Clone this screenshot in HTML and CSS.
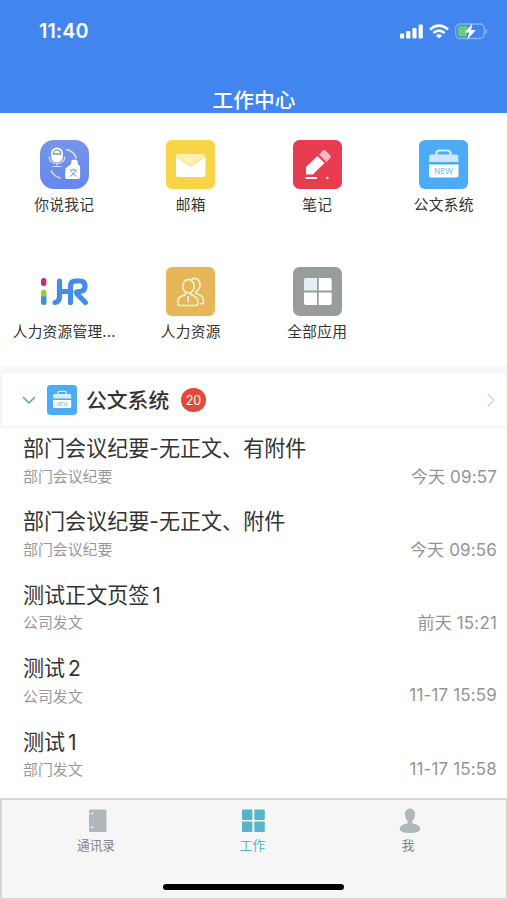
FILE: index.html
```html
<!DOCTYPE html>
<html lang="zh-CN">
<head>
<meta charset="utf-8">
<title>工作中心</title>
<link rel="stylesheet" href="styles.css">
</head>
<body>
<header class="header">
  <div class="status">
    <span class="time">11:40</span>
    <div class="signals">
      <svg width="23" height="15" viewBox="0 0 23 15" fill="#fff"><rect x="0" y="9.5" width="4.2" height="5" rx="1"/><rect x="6.2" y="7" width="4.2" height="7.5" rx="1"/><rect x="12.4" y="4" width="4.2" height="10.5" rx="1"/><rect x="18.6" y="0.5" width="4.2" height="14" rx="1"/></svg>
      <svg width="20" height="15" viewBox="0 0 20 15" fill="none" stroke="#fff" stroke-width="2.7"><path d="M1 5.5Q10-2.2 19 5.5"/><path d="M4.4 9Q10 4.2 15.6 9"/><path d="M10 14.6L6.9 11.4Q10 8.9 13.1 11.4Z" fill="#fff" stroke="none"/></svg>
      <svg width="33" height="17" viewBox="0 0 33 17"><rect x=".7" y="1" width="28.6" height="14.5" rx="4.3" fill="none" stroke="#7db7ef" stroke-width="1.3"/><path d="M5 3h7v10.500H5a2 2 0 0 1-2-2V5a2 2 0 0 1 2-2z" fill="#68c981"/><path d="M31 6q1.8 2.2 0 4.5z" fill="#7db7ef" stroke="#7db7ef"/><path d="M17.5.2L9.600 9.500h4.6L12.200 16.700 20.800 7h-4.800z" fill="#fff"/></svg>
    </div>
  </div>
  <h1 class="title">工作中心</h1>
</header>

<main>
<section class="apps">
  <div class="app">
    <svg class="icon" viewBox="0 0 49 49"><defs><linearGradient id="voice" x2="0" y2="1"><stop stop-color="#7795e8"/><stop offset="1" stop-color="#6687ee"/></linearGradient></defs><rect width="49" height="49" rx="14" fill="url(#voice)"/><rect x="11" y="7.5" width="12" height="15" rx="6" fill="#fff"/><path d="M13.5 15v-1.5a3.6 3.6 0 0 1 7.2 0V15M14 14h6" fill="none" stroke="#8198df" stroke-width="1.4"/><path d="M9 16.5c0 4 3.3 7 8 7s8-3 8-7M17 23.5v3M12.5 26.5h9" fill="none" stroke="#d5def9" stroke-width="1.2"/><path d="M26 9.5c5 .8 8.8 4.2 10.5 9M11 30.5c1.8 3.8 5.4 6.6 9.800 7.500" fill="none" stroke="#dbe5ff" stroke-width="1.5"/><path d="M25.500 28.500l5.700-4.500v-3l1.500-1.200h3.500l1.500 1.200v3l2.400 2.200V37q0 2-2 2h-11q-2 0-2-2z" fill="#fff"/><path d="M29.500 30h7.500M33.200 28.500V30M30 36.500q4.500-2 5.700-6M30.800 31q2 4 6 5.400" fill="none" stroke="#8299e4"/></svg>
    <span class="label">你说我记</span>
  </div>
  <div class="app">
    <svg class="icon" viewBox="0 0 49 49"><rect width="49" height="49" rx="6" fill="#f8d447"/><path d="M10.5 14h28v3L24.5 25.3 10.5 17z" fill="#fff0b7"/><path d="M10 17l14.5 9.3L39.5 17v18q0 2-2 2h-25.500q-2 0-2-2z" fill="#fff"/></svg>
    <span class="label">邮箱</span>
  </div>
  <div class="app">
    <svg class="icon" viewBox="0 0 49 49"><rect width="49" height="49" rx="6.5" fill="#e83d51"/><path d="M24.5 16l7 7L19.8 34.5H13V27z" fill="#fff"/><path d="M26 14.5l4-4q1.2-1.2 2.4 0l5 5q1.2 1.2 0 2.4l-4 4z" fill="#f8b9c1"/><path d="M13.2 38h10" stroke="#fff" stroke-width="2" stroke-linecap="round"/><circle cx="34.3" cy="38" r="1.2" fill="#fff"/></svg>
    <span class="label">笔记</span>
  </div>
  <div class="app">
    <svg class="icon" viewBox="0 0 49 49"><rect width="49" height="49" rx="6" fill="#4cabf5"/><path d="M17.5 15.5v-2.3q0-2.700 2.700-2.700h8.600q2.700 0 2.700 2.700v2.300" fill="none" stroke="#d5eefe" stroke-width="2.2"/><path d="M10 22v-5.300q0-2.200 2.200-2.200h25q2.200 0 2.200 2.200V22z" fill="#c9e8fe"/><path d="M10 24.5h29.500v11q0 2-2 2H12q-2 0-2-2z" fill="#fff"/><text class="new" x="24.7" y="34" text-anchor="middle">NEW</text></svg>
    <span class="label">公文系统</span>
  </div>
  <div class="app">
    <svg class="icon" viewBox="0 0 49 49"><rect x="1" y="11" width="5.5" height="8" rx="2.5" fill="#b83777"/><path d="M1 30v-5q0-2.500 2.700-2.500T6.500 25v5z" fill="#98c94f"/><path d="M1 29.500h5.500v6q0 2.500-2.800 2.500T1 35.500z" fill="#438de5"/><path d="M19.500 14v15q0 6-4.500 6.500M19.500 24.500H31M30.500 35.500V19.500q0-5.500 5-5.500h4.500q5 0 5 5t-5 5.500h-1.200q-3.700 0-1.200 3l7.800 8" fill="none" stroke="#438de5" stroke-width="5.200" stroke-linecap="round" stroke-linejoin="round"/></svg>
    <span class="label">人力资源管理...</span>
  </div>
  <div class="app">
    <svg class="icon" viewBox="0 0 49 49"><rect width="49" height="49" rx="6" fill="#e5b759"/><g fill="none" stroke="#fff5dd" stroke-width="1.5" stroke-linejoin="round" stroke-linecap="round"><ellipse cx="22.500" cy="19.300" rx="5.700" ry="6.700"/><path d="M19.500 25.500v2l-5 2.200q-2.700 1.300-2.700 5v2.200q0 1.500 1.500 1.500h17q1.500 0 1.500-1.500v-2.200q0-3.700-2.700-5l-4.200-2.200v-2M22.300 29.500V35M26 12.200c4-2.300 8 .7 8 5.200q0 4.600-3.800 7v2l4.300 2q3 1.500 3 5.200v2q0 1.200-1.300 1.200h-1.700"/></g></svg>
    <span class="label">人力资源</span>
  </div>
  <div class="app">
    <svg class="icon" viewBox="0 0 49 49"><rect width="49" height="49" rx="6.5" fill="#999c9d"/><path d="M24 11v12.500H11V13q0-2 2-2z" fill="#e6eff3"/><path d="M25.700 11h11q2 0 2 2v10.500h-13zM11 25.500h13V38H13q-2 0-2-2zM25.700 25.500h13V36q0 2-2 2h-11z" fill="#fff"/></svg>
    <span class="label">全部应用</span>
  </div>
</section>

<section class="docs">
  <div class="docs-head">
    <svg width="14" height="9" viewBox="0 0 14 9"><path d="M1 1l6 6 6-6" fill="none" stroke="#559fc2" stroke-width="1.5"/></svg>
    <svg class="small-icon" viewBox="0 0 49 49"><rect width="49" height="49" rx="6" fill="#4cabf5"/><path d="M17.500 15.500v-2.300q0-2.700 2.700-2.700h8.600q2.700 0 2.700 2.700v2.300" fill="none" stroke="#d5eefe" stroke-width="2.200"/><path d="M10 22v-5.300q0-2.200 2.200-2.200h25q2.200 0 2.200 2.200V22z" fill="#d5eefe"/><path d="M10 24.500h29.500v11q0 2-2 2H12q-2 0-2-2z" fill="#fff"/><text class="new" x="24.700" y="34" text-anchor="middle">NEW</text></svg>
    <h2 class="docs-title">公文系统</h2>
    <span class="badge">20</span>
    <svg class="next" width="8" height="15" viewBox="0 0 8 15"><path d="M.8 1l6.200 6.300-6.200 6.400" fill="none" stroke="#d2d2d2" stroke-width="1.3"/></svg>
  </div>
  <ul class="list">
    <li class="item"><h3 class="name">部门会议纪要-无正文、有附件</h3><div class="meta"><span>部门会议纪要</span><time class="date">今天 09:57</time></div></li>
    <li class="item"><h3 class="name">部门会议纪要-无正文、附件</h3><div class="meta"><span>部门会议纪要</span><time class="date">今天 09:56</time></div></li>
    <li class="item"><h3 class="name">测试正文页签<span class="num">1</span></h3><div class="meta"><span>公司发文</span><time class="date">前天 15:21</time></div></li>
    <li class="item"><h3 class="name">测试<span class="num">2</span></h3><div class="meta"><span>公司发文</span><time class="date">11-17 15:59</time></div></li>
    <li class="item"><h3 class="name">测试<span class="num">1</span></h3><div class="meta"><span>部门发文</span><time class="date">11-17 15:58</time></div></li>
  </ul>
</section>
</main>

<nav class="tabs">
  <div class="tab">
    <svg width="24" height="26" viewBox="0 0 24 26"><rect x="4" y="1.500" width="17.500" height="22.500" rx="1" fill="#b1b7bd"/><path d="M4.500 6h3V4M4.500 19.500h3v-2" fill="none" stroke="#e3e5e7" stroke-width="1.200"/></svg>
    <span>通讯录</span>
  </div>
  <div class="tab active">
    <svg width="24" height="26" viewBox="0 0 24 26" fill="#56b5c8"><rect x="1" y="1.500" width="10.400" height="10.400" rx="1"/><rect x="13.400" y="1.500" width="10.400" height="10.400" rx="1"/><rect x="1" y="13.600" width="10.400" height="10.400" rx="1"/><rect x="13.400" y="13.600" width="10.400" height="10.400" rx="1"/></svg>
    <span>工作</span>
  </div>
  <div class="tab">
    <svg width="24" height="26" viewBox="0 0 24 26"><path d="M13 .5c3 0 5 2.400 5 5.800 0 3-1.200 5.300-2.700 6.700v2.200c4.500.9 8 2.600 8 5.700 0 2.700-4.600 4-10.300 4s-10.300-1.300-10.300-4c0-3.100 3.500-4.800 8-5.700V13C9.200 11.600 8 9.300 8 6.300 8 2.900 10 .5 13 .5z" fill="#b1b7bd"/></svg>
    <span>我</span>
  </div>
  <div class="home"></div>
</nav>
</body>
</html>
```

FILE: styles.css
```css
* { box-sizing: border-box; }
body {
  margin: 0;
  height: 900px;
  display: flex;
  flex-direction: column;
  overflow: hidden;
  background: #fff;
  color: #333;
  font-family: Inter, "Noto Sans CJK SC", sans-serif;
}
h1, h2, h3, ul { margin: 0; padding: 0; font-weight: 400; }
svg { display: block; flex: none; }

.header {
  height: 113px;
  flex: none;
  background: #4385ef;
  color: #fff;
}
.status {
  height: 62px;
  padding: 0 19px 0 39px;
  display: flex;
  align-items: center;
  justify-content: space-between;
}
.time { font-size: 19.7px; font-weight: 600; letter-spacing: 0.1px; }
.signals { display: flex; align-items: center; gap: 6px; }
.title {
  margin-top: 25px;
  padding-left: 1px;
  font-size: 20.7px;
  line-height: 28px;
  font-weight: 500;
  text-align: center;
}

.apps {
  height: 253px;
  padding: 27px 0 0 1px;
  display: grid;
  grid-template-columns: repeat(4, 1fr);
  grid-auto-rows: 126.5px;
}
.app { display: flex; flex-direction: column; align-items: center; min-width: 0; }
.icon { width: 49px; height: 49px; }
.label {
  margin-top: 5px;
  font-size: 14.7px;
  line-height: 22px;
  letter-spacing: 0.25px;
  white-space: nowrap;
}
.new { font: 8px Inter, sans-serif; fill: #70b9e2; }

.docs { border-top: 8px solid #f7f7f9; }
.docs-head {
  height: 54px;
  padding: 0 11px 0 20px;
  display: flex;
  align-items: center;
  border: solid #f5f5f7;
  border-width: 0 1px 2px 2px;
}
.small-icon { width: 30px; height: 30px; margin-left: 11px; }
.docs-title { margin: 2px 0 0 9px; font-size: 20.8px; line-height: 30px; font-weight: 500; }
.badge {
  width: 24.5px;
  height: 24.5px;
  margin-left: 12px;
  border-radius: 50%;
  background: #e04b3b;
  color: #fff;
  font-size: 12.5px;
  line-height: 25px;
  text-align: center;
}
.next { margin-left: auto; }
.list { list-style: none; }
.item { height: 73.4px; padding: 6px 10px 0 23px; }
.name { font-size: 21.05px; line-height: 30px; }
.num { margin-left: 3px; }
.meta {
  height: 22px;
  display: flex;
  align-items: center;
  justify-content: space-between;
  font-size: 14.9px;
  color: #999;
}
.date { font-size: 17px; letter-spacing: 0.15px; color: #949494; }

.tabs {
  height: 102px;
  margin-top: auto;
  flex: none;
  padding: 8px 19px 0 17px;
  display: grid;
  grid-template-columns: repeat(3, 1fr);
  grid-template-rows: 76px 6px;
  align-content: start;
  border: 2px solid #d8d8d9;
  border-right-width: 1px;
  background: #f6f6f7;
}
.tab {
  display: flex;
  flex-direction: column;
  align-items: center;
  color: #858585;
  font-size: 12.7px;
  line-height: 23px;
}
.tab span { margin-right: 2px; }
.active { color: #56b5c8; }
.active span { margin-right: 1px; }
.home {
  grid-column: 1 / -1;
  justify-self: center;
  width: 181px;
  height: 6px;
  border-radius: 3px;
  background: #000;
}
```
